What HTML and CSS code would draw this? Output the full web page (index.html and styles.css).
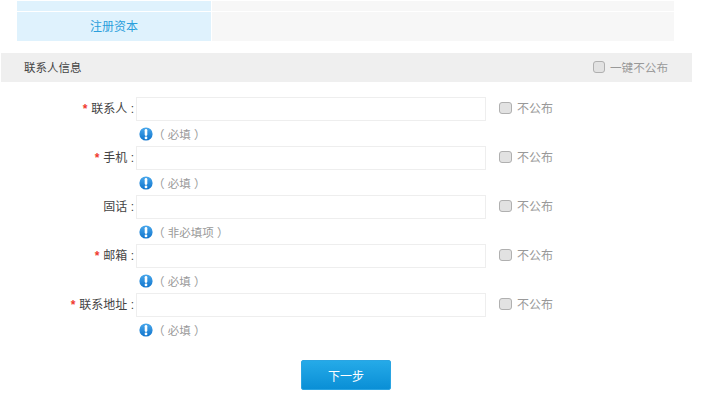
FILE: index.html
```html
<!DOCTYPE html>
<html lang="zh-CN">
  <head>
    <meta charset="UTF-8" />
    <title>联系人信息</title>
    <link rel="stylesheet" href="styles.css">
  </head>
  <body>
    <svg class="icon-defs" width="0" height="0">
      <defs>
        <linearGradient id="hintFill" x1="0" y1="0" x2="0" y2="1">
          <stop offset="0" stop-color="#4aa8ec" />
          <stop offset="1" stop-color="#0f74cc" />
        </linearGradient>
      </defs>
    </svg>

    <div class="info-table">
      <div class="info-row short">
        <div class="info-name"></div>
        <div class="info-value"></div>
      </div>
      <div class="info-row">
        <div class="info-name">注册资本</div>
        <div class="info-value"></div>
      </div>
    </div>

    <div class="section-bar">
      <span class="section-title">联系人信息</span>
      <label class="hide-all"><span class="check"></span>一键不公布</label>
    </div>

    <form class="contact-form">
      <div class="field">
        <div class="field-line">
          <label class="field-label"><span class="star">*</span>联系人 :</label>
          <input class="field-input" type="text" />
          <label class="hide-one"><span class="check"></span>不公布</label>
        </div>
        <div class="hint">
          <svg class="hint-icon" viewBox="0 0 14 14"><circle cx="7" cy="7" r="6.6" fill="url(#hintFill)" /><path d="M7 3.2v4.4" stroke="#fff" stroke-width="2.6" stroke-linecap="round" /><circle cx="7" cy="10.9" r="1.4" fill="#fff" /></svg>
          <span>（ 必填 ）</span>
        </div>
      </div>
      <div class="field">
        <div class="field-line">
          <label class="field-label"><span class="star">*</span>手机 :</label>
          <input class="field-input" type="text" />
          <label class="hide-one"><span class="check"></span>不公布</label>
        </div>
        <div class="hint">
          <svg class="hint-icon" viewBox="0 0 14 14"><circle cx="7" cy="7" r="6.6" fill="url(#hintFill)" /><path d="M7 3.2v4.4" stroke="#fff" stroke-width="2.6" stroke-linecap="round" /><circle cx="7" cy="10.9" r="1.4" fill="#fff" /></svg>
          <span>（ 必填 ）</span>
        </div>
      </div>
      <div class="field">
        <div class="field-line">
          <label class="field-label">固话 :</label>
          <input class="field-input" type="text" />
          <label class="hide-one"><span class="check"></span>不公布</label>
        </div>
        <div class="hint">
          <svg class="hint-icon" viewBox="0 0 14 14"><circle cx="7" cy="7" r="6.6" fill="url(#hintFill)" /><path d="M7 3.2v4.4" stroke="#fff" stroke-width="2.6" stroke-linecap="round" /><circle cx="7" cy="10.9" r="1.4" fill="#fff" /></svg>
          <span>（ 非必填项 ）</span>
        </div>
      </div>
      <div class="field">
        <div class="field-line">
          <label class="field-label"><span class="star">*</span>邮箱 :</label>
          <input class="field-input" type="text" />
          <label class="hide-one"><span class="check"></span>不公布</label>
        </div>
        <div class="hint">
          <svg class="hint-icon" viewBox="0 0 14 14"><circle cx="7" cy="7" r="6.6" fill="url(#hintFill)" /><path d="M7 3.2v4.4" stroke="#fff" stroke-width="2.6" stroke-linecap="round" /><circle cx="7" cy="10.9" r="1.4" fill="#fff" /></svg>
          <span>（ 必填 ）</span>
        </div>
      </div>
      <div class="field">
        <div class="field-line">
          <label class="field-label"><span class="star">*</span>联系地址 :</label>
          <input class="field-input" type="text" />
          <label class="hide-one"><span class="check"></span>不公布</label>
        </div>
        <div class="hint">
          <svg class="hint-icon" viewBox="0 0 14 14"><circle cx="7" cy="7" r="6.6" fill="url(#hintFill)" /><path d="M7 3.2v4.4" stroke="#fff" stroke-width="2.6" stroke-linecap="round" /><circle cx="7" cy="10.9" r="1.4" fill="#fff" /></svg>
          <span>（ 必填 ）</span>
        </div>
      </div>
      <div class="actions">
        <button class="next-btn" type="button">下一步</button>
      </div>
    </form>
  </body>
</html>
```

FILE: styles.css
```css
* {
  box-sizing: border-box;
}

body {
  margin: 0;
  padding: 1px 0 0;
  height: 413px;
  overflow: hidden;
  background-color: #fff;
  font-family: "Liberation Sans", "Noto Sans CJK SC", sans-serif;
  font-size: 12px;
  color: #444;
}

.icon-defs {
  display: block;
  height: 0;
}

.info-table {
  margin-left: 17px;
  width: 657px;
}

.info-row {
  display: flex;
  height: 29px;
  margin-top: 1px;
}

.info-row.short {
  height: 10px;
  margin-top: 0;
}

.info-name {
  width: 194px;
  margin-right: 1px;
  background-color: #dff2fd;
  color: #2a9fdc;
  text-align: center;
  line-height: 30px;
}

.info-value {
  flex: 1;
  background-color: #f7f7f7;
}

.section-bar {
  display: flex;
  justify-content: space-between;
  align-items: center;
  margin: 12px 0 0 1px;
  width: 691px;
  height: 29px;
  padding: 0 24px 2px 23px;
  background-color: #efefef;
}

.section-title {
  font-size: 11.5px;
  color: #444;
}

.hide-all,
.hide-one {
  display: flex;
  align-items: center;
  color: #999;
}

.hide-all {
  font-size: 11.6px;
}

.check {
  width: 12px;
  height: 12px;
  margin-right: 5px;
  background-color: #e2e2e2;
  border: 1px solid #b0b0b0;
  border-radius: 3px;
}

.hide-one .check {
  width: 13px;
}

.contact-form {
  padding-top: 15px;
}

.field {
  height: 49px;
}

.field-line {
  display: flex;
  align-items: center;
  height: 24px;
}

.field-label {
  width: 136px;
  padding: 0 2px 3px 0;
  text-align: right;
  color: #444;
}

.star {
  margin-right: 4px;
  font-weight: bold;
  line-height: 1;
  color: #f03a2e;
}

.field-input {
  width: 350px;
  height: 24px;
  border: 1px solid #eee;
  background-color: #fff;
}

.hide-one {
  margin-left: 13px;
  padding-bottom: 3px;
}

.hint {
  display: flex;
  align-items: center;
  margin: 6px 0 0 139px;
  height: 14px;
  color: #999;
  font-size: 11.5px;
}

.hint-icon {
  width: 14px;
  height: 14px;
}

.actions {
  display: flex;
  justify-content: center;
  padding: 18px 0 0;
  width: 692px;
}

.next-btn {
  width: 90px;
  height: 30px;
  border: 1px solid #2aa4e2;
  border-radius: 2px;
  background: linear-gradient(#25aae8, #0a8fd6);
  color: #fff;
  font-family: inherit;
  font-size: 12px;
}
```
